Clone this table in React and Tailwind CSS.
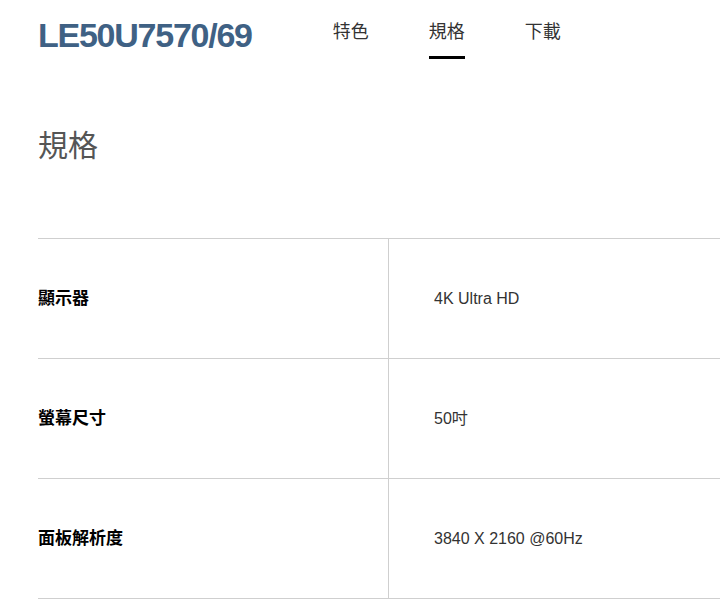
import React from 'react';

const SPECS = [
  { label: '顯示器', value: '4K Ultra HD' },
  { label: '螢幕尺寸', value: '50吋' },
  { label: '面板解析度', value: '3840 X 2160 @60Hz' },
];

const NAV = [
  { label: '特色', active: false },
  { label: '規格', active: true },
  { label: '下載', active: false },
];

const CJK = "font-['Liberation_Sans','Noto_Sans_CJK_TC',sans-serif]";

export default function App() {
  return (
    <div className={`min-h-[601px] w-[720px] overflow-hidden bg-white pl-[38px] ${CJK}`}>
      {/* ── Product header + tabs ── */}
      <header className="flex items-start">
        <h1 className="mt-[18px] text-[34px] font-bold leading-[34px] tracking-[-1.25px] text-[#3f6184]">
          LE50U7570/69
        </h1>
        <nav className="ml-[81px] flex gap-[60px] pt-[21px]">
          {NAV.map((item) => (
            <a
              key={item.label}
              className={`block pb-[13px] text-[18px] leading-[22px] text-[#333] ${
                item.active ? 'border-b-[3px] border-black' : 'border-b-[3px] border-transparent'
              }`}
            >
              {item.label}
            </a>
          ))}
        </nav>
      </header>

      <h2 className="mt-[67px] text-[30px] font-normal leading-[40px] text-[#555]">規格</h2>

      {/* ── Spec table ── */}
      <div className="mt-[72px] w-[720px] border-t border-[#cfcfcf]">
        {SPECS.map((row) => (
          <div key={row.label} className="flex h-[120px] border-b border-[#cfcfcf]">
            <div className="flex w-[351px] items-center border-r border-[#cfcfcf] text-[17px] font-bold text-black">
              {row.label}
            </div>
            <div className="flex flex-1 items-center pl-[45px] text-[16px] text-[#333]">
              {row.value}
            </div>
          </div>
        ))}
      </div>
    </div>
  );
}
